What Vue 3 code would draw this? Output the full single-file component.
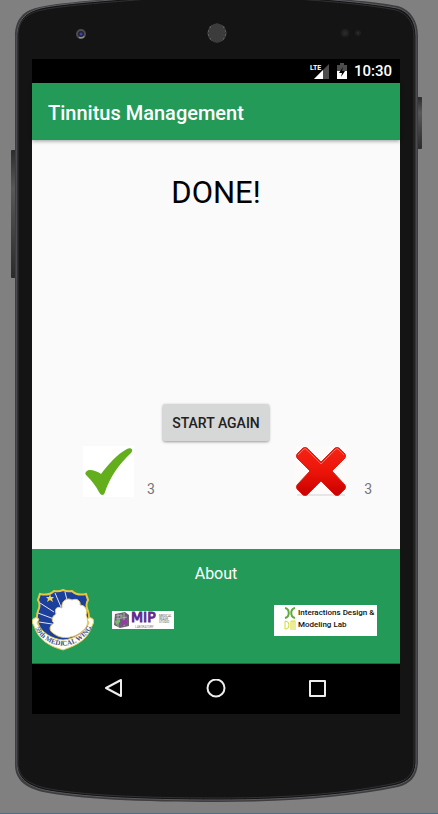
<script setup>
import { ref } from 'vue'

const correct = ref(3)
const wrong = ref(3)

function restart() {
  correct.value = 0
  wrong.value = 0
}

const grille = []
for (let row = -4; row <= 4; row++) {
  for (let col = -4; col <= 4; col++) {
    const x = col * 2 + (row % 2 ? 1 : 0)
    const y = row * 2
    if (Math.hypot(x, y) < 9) grille.push({ x: 217 + x, y: 33 + y })
  }
}
</script>

<template>
  <div class="stage">
    <svg class="frame" viewBox="0 0 438 813" preserveAspectRatio="none" aria-hidden="true">
      <defs>
        <linearGradient id="side" x1="0" y1="0" x2="0" y2="1">
          <stop offset="0" stop-color="#2c2c2e" />
          <stop offset="0.3" stop-color="#585858" />
          <stop offset="1" stop-color="#2b2b2b" />
        </linearGradient>
      </defs>
      <rect x="11" y="150" width="5" height="128" rx="1" fill="url(#side)" />
      <rect x="417" y="97" width="5" height="52" rx="1" fill="url(#side)" />
      <path
        d="M15 36C15 20 23 10 40 7C62 2 113 -1 160 -5H280C330 -2 372 1 398 6C411 10 418 21 418 36V763C417 777 410 784 398 787C350 797 290 802 218 802C140 802 78 799 43 792C26 788 15 780 15 765Z"
        fill="#3d3d3f"
      />
      <path
        d="M17 36C17 21 25 12 41 8C64 3 115 0 160 -4H280C330 -1 370 3 397 8C409 11 416 22 416 36V763C415 776 408 782 397 785C350 795 290 800 218 800C140 800 79 797 44 790C28 786 17 778 17 764Z"
        fill="#141414"
        stroke="#5b5b61"
        stroke-width="1"
      />
      <path
        d="M18 36C18 22 26 13 42 10C65 5 115 2 160 -2H280C330 1 370 5 396 10C407 13 414 23 414 36V763C413 775 407 780 396 783C350 793 290 798 218 798C140 798 79 795 45 788C29 784 18 777 18 763Z"
        fill="#141414"
        stroke="#303033"
        stroke-width="1"
      />
      <circle cx="81" cy="34" r="5" fill="#4c4c4e" />
      <path d="M79 37a4 4 0 0 0 5 -1" fill="none" stroke="#8e8e8e" stroke-width="2" />
      <circle cx="81" cy="34" r="3" fill="#22223a" />
      <circle cx="81" cy="34" r="1.500" fill="#4040a8" />
      <circle cx="217" cy="33" r="9.500" fill="#5c5c5c" />
      <circle v-for="(h, i) in grille" :key="i" :cx="h.x" :cy="h.y" r="0.800" fill="#161616" />
      <circle cx="345" cy="33" r="4" fill="#202020" />
      <circle cx="345" cy="33" r="2" fill="#292929" />
      <circle cx="358" cy="33" r="3" fill="#1f1f1f" />
      <circle cx="358" cy="33" r="1" fill="#303030" />
    </svg>

    <div class="screen">
      <div class="status">
        <svg class="signal" viewBox="0 0 19 16" aria-label="LTE signal">
          <path d="M19 1V16H4Z" fill="#4c4c4c" />
          <path d="M13 7V16H4Z" fill="#fff" />
          <path d="M0 0H11V8H0Z" fill="#000" />
          <text x="0" y="7" class="lte">LTE</text>
        </svg>
        <svg class="battery" viewBox="0 0 10 16" aria-label="Battery charging">
          <path d="M3 0H7V2H10V8H0V2H3Z" fill="#4c4c4c" />
          <path d="M0 8H10V16H0Z" fill="#fff" />
          <path d="M6 4L2 10H5L4 14L8 8H5Z" fill="#000" />
        </svg>
        <time class="clock">10:30</time>
      </div>

      <header class="appbar">
        <h1>Tinnitus Management</h1>
      </header>

      <main class="content">
        <h2>DONE!</h2>
        <div class="actions">
          <button class="again" type="button" @click="restart">START AGAIN</button>
        </div>
        <div class="scores">
          <div class="score">
            <svg class="mark" viewBox="0 0 51 51" aria-label="Correct">
              <rect width="51" height="51" fill="#fff" />
              <path
                d="M3 26C5 23 9 24 12 25C15 26 17 27 18 28C25 19 34 8 44 3C48 1 51 4 48 7C36 18 27 31 22 46C21 50 18 50 16 46C13 40 9 35 4 30C2 28 2 27 3 26Z"
                fill="#62ae1c"
              />
            </svg>
            <span>{{ correct }}</span>
          </div>
          <div class="score wide">
            <svg class="mark" viewBox="0 0 51 51" aria-label="Wrong">
              <defs>
                <linearGradient id="red" x1="0" y1="0" x2="0" y2="1">
                  <stop offset="0" stop-color="#f52416" />
                  <stop offset="0.500" stop-color="#ec1408" />
                  <stop offset="1" stop-color="#c90000" />
                </linearGradient>
              </defs>
              <rect width="51" height="51" fill="#fdfafa" />
              <path d="M2 49H50" stroke="#e6e6e6" stroke-width="2" />
              <path
                d="M8 2Q10 1 12 2L26 16L40 2Q42 1 44 2L50 8Q51 10 50 12L37 25L50 39Q51 41 50 43L44 49Q42 50 40 49L26 35L12 49Q10 50 8 49L2 43Q1 41 2 39L15 25L2 12Q1 10 2 8Z"
                fill="url(#red)"
                stroke="#d5221a"
                stroke-width="1"
              />
              <path
                d="M3 9L9 3Q10 2 12 4L26 18L40 4Q42 2 43 3L49 9"
                fill="none"
                stroke="#ff7468"
                stroke-width="1"
              />
            </svg>
            <span>{{ wrong }}</span>
          </div>
        </div>
      </main>

      <footer class="about">
        <a href="#about">About</a>
        <div class="logos">
          <svg class="wing" viewBox="0 0 62 62" aria-label="59th Medical Wing">
            <defs>
              <path id="motto" d="M3 39C10 53 22 56 31 57C41 56 52 52 60 38" />
            </defs>
            <path
              d="M8 5Q17 7 22 2Q27 3 31 1Q35 3 40 2Q45 7 54 5L56 11Q53 16 56 22C61 38 48 49 31 55C14 49 1 38 6 22Q9 16 6 11Z"
              fill="#1d3f9c"
              stroke="#e9c544"
              stroke-width="2"
            />
            <path d="M8 14L22 23M6 24L22 30M7 33L20 35M23 4L29 18M33 3L35 11" stroke="#dfe4f2" stroke-width="1" />
            <path d="M18 5L19 8H22L20 10L21 13L18 11L15 13L16 10L14 8H17Z" fill="#f3d64e" />
            <path
              d="M24 25C22 20 25 17 30 19C29 12 35 8 40 11C45 9 49 12 48 16C53 16 56 21 54 26C57 32 56 39 49 43C44 48 30 52 21 44C16 41 18 36 22 34C19 32 20 27 24 25Z"
              fill="#fff"
              stroke="#e6cd70"
              stroke-width="1"
            />
            <path
              d="M1 30Q4 27 7 30L5 34C10 44 20 50 31 51C43 50 52 44 57 34L55 30Q58 27 61 30Q63 33 60 37C56 50 46 56 31 61C16 57 6 50 2 37Q-1 33 1 30Z"
              fill="#fffef2"
              stroke="#e1c859"
              stroke-width="1"
            />
            <text class="motto"><textPath href="#motto" startOffset="50%">59th MEDICAL WING</textPath></text>
          </svg>

          <svg class="mip" viewBox="0 0 62 18" aria-label="MIP Laboratory">
            <rect width="62" height="18" fill="#fff" />
            <path d="M3 3L13 1L17 4V15L8 17L2 14Z" fill="#68656d" />
            <path d="M4 5L9 4M4 8L15 6M6 3V16M12 2V15" stroke="#b6a9bd" stroke-width="1" />
            <path d="M3 10L8 8V11L4 14ZM9 3L11 5L8 7Z" fill="#79bd74" />
            <path d="M9 10L15 8V12L10 15ZM13 3L16 5V8Z" fill="#953ba4" />
            <text x="19" y="11" class="mip-name">MIP</text>
            <text x="23" y="17" class="mip-sub">LABORATORY</text>
            <text x="47" y="6" class="mip-side">MEDICAL</text>
            <text x="47" y="9" class="mip-side">IMAGE</text>
            <text x="47" y="12" class="mip-side">STUDIO</text>
          </svg>

          <div class="lab">
            <svg class="lab-icon" viewBox="0 0 12 24" aria-hidden="true">
              <path d="M1 1C6 2 6 10 1 11M11 1C6 2 6 10 11 11" fill="none" stroke="#62a83f" stroke-width="2" />
              <path
                d="M1 14V22H2Q5 22 5 18Q5 14 1 14ZM7 23V14H11V23M9 14V23"
                fill="none"
                stroke="#d3dc2f"
                stroke-width="1"
              />
            </svg>
            <p>Interactions Design &amp;<br />Modeling Lab</p>
          </div>
        </div>
      </footer>

      <nav class="keys">
        <button type="button" aria-label="Back">
          <svg viewBox="0 0 20 20"><path d="M17 1V17L2 9Z" /></svg>
        </button>
        <button type="button" aria-label="Home">
          <svg viewBox="0 0 20 20"><circle cx="10" cy="9" r="8.500" /></svg>
        </button>
        <button type="button" aria-label="Recent apps">
          <svg viewBox="0 0 20 20"><rect x="2" y="2" width="15" height="15" /></svg>
        </button>
      </nav>
    </div>
  </div>
</template>

<style>
body {
  margin: 0;
  background: #808080;
}
</style>

<style scoped>
.stage {
  position: relative;
  box-sizing: border-box;
  min-height: 100vh;
  display: flex;
  padding: 59px 38px 99px 32px;
  background: #808080;
  border-bottom: 1px solid #2c77b4;
  font-family: Roboto, "Liberation Sans", sans-serif;
}

.frame {
  position: absolute;
  inset: 0;
  width: 100%;
  height: 100%;
}

.screen {
  position: relative;
  flex: 1;
  min-width: 0;
  display: flex;
  flex-direction: column;
  background: #fafafa;
}

.status {
  display: flex;
  align-items: center;
  justify-content: flex-end;
  height: 24px;
  padding-right: 8px;
  background: #000;
  color: #fff;
}

.signal {
  width: 19px;
  height: 16px;
  margin-right: 8px;
}

.battery {
  width: 10px;
  height: 16px;
  margin-right: 7px;
}

.lte {
  font-size: 7px;
  font-weight: 700;
  fill: #fff;
}

.clock {
  font-size: 15px;
  font-weight: 500;
}

.appbar {
  position: relative;
  display: flex;
  align-items: center;
  height: 57px;
  padding: 0 16px;
  background: #249a58;
  box-shadow: 0 1px 4px rgba(0, 0, 0, 0.4);
}

h1 {
  margin: 0;
  padding-top: 2px;
  font-size: 20px;
  font-weight: 500;
  line-height: 24px;
  color: #fff;
}

.content {
  flex: 1;
  display: flex;
  flex-direction: column;
  padding: 32px 0 52px;
}

h2 {
  margin: 0;
  font-size: 31px;
  font-weight: 400;
  line-height: 42px;
  text-align: center;
  color: #000;
}

.actions {
  display: flex;
  justify-content: center;
  margin-top: auto;
}

.again {
  height: 37px;
  padding: 0 9px;
  border: 0;
  border-radius: 2px;
  background: #d6d7d7;
  box-shadow: 0 1px 3px rgba(0, 0, 0, 0.4);
  font: 500 14px/20px Roboto, "Liberation Sans", sans-serif;
  color: #212121;
}

.scores {
  display: flex;
  justify-content: space-between;
  margin-top: 5px;
  padding: 0 28px 0 51px;
}

.score {
  display: flex;
  align-items: flex-end;
  gap: 13px;
  font-size: 14px;
  line-height: 16px;
  color: #757575;
}

.score.wide {
  gap: 18px;
}

.mark {
  width: 51px;
  height: 51px;
}

.about {
  display: flex;
  flex-direction: column;
  height: 115px;
  box-sizing: border-box;
  padding-top: 16px;
  background: #249a58;
  border-bottom: 1px solid #176a3b;
}

.about a {
  align-self: center;
  font-size: 16px;
  line-height: 18px;
  color: #fff;
  text-decoration: none;
}

.logos {
  display: flex;
  align-items: center;
  margin-top: 6px;
  padding-right: 23px;
}

.wing {
  width: 62px;
  height: 62px;
}

.motto {
  font: 700 7px "Liberation Serif", serif;
  fill: #3d4f8c;
  text-anchor: middle;
}

.mip {
  width: 62px;
  height: 18px;
  margin-left: 18px;
  overflow: visible;
}

.mip-name {
  font: 400 14px "DejaVu Sans", sans-serif;
  fill: #652a8e;
  stroke: #652a8e;
}

.mip-sub {
  font-size: 3px;
  fill: #777;
}

.mip-side {
  font-size: 3px;
  fill: #555;
}

.lab {
  box-sizing: border-box;
  display: flex;
  align-items: flex-start;
  gap: 2px;
  width: 103px;
  height: 31px;
  margin-left: auto;
  padding: 2px 0 0 10px;
  background: #fff;
}

.lab-icon {
  flex: none;
  width: 12px;
  height: 24px;
}

.lab p {
  margin: 0;
  font: 500 8px/12px Roboto, sans-serif;
  white-space: nowrap;
  color: #111;
}

.keys {
  display: flex;
  align-items: center;
  justify-content: center;
  gap: 82px;
  height: 50px;
  background: #000;
}

.keys button {
  display: flex;
  padding: 0;
  border: 0;
  background: none;
}

.keys svg {
  width: 20px;
  height: 20px;
  fill: none;
  stroke: #eee;
  stroke-width: 2;
  stroke-linejoin: round;
}
</style>
